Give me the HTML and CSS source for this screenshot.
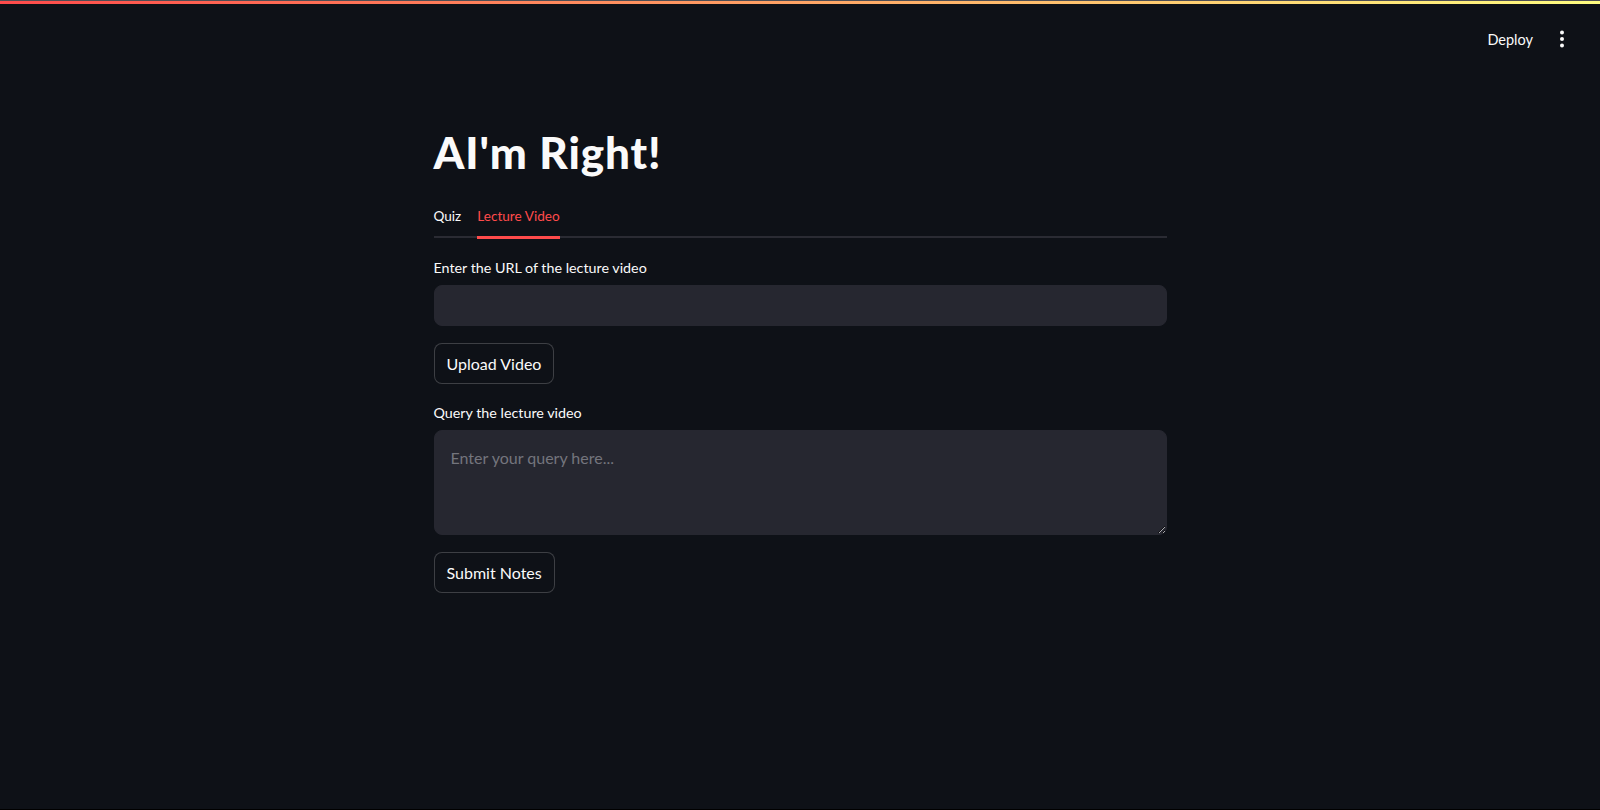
FILE: index.html
```html
<!DOCTYPE html>
<html lang="en">
<head>
<meta charset="utf-8">
<title>AI'm Right!</title>
<link rel="stylesheet" href="styles.css">
</head>
<body>
<div class="app">
  <div class="decoration"></div>
  <header class="toolbar">
    <span class="deploy">Deploy</span>
    <button class="menu" aria-label="Main menu">
      <svg width="24" height="24" viewBox="0 0 24 24"><circle cx="12" cy="5.5" r="2" fill="#fafafa"/><circle cx="12" cy="12" r="2" fill="#fafafa"/><circle cx="12" cy="18.5" r="2" fill="#fafafa"/></svg>
    </button>
  </header>
  <main class="main">
    <div class="block">
      <h1 class="title">AI'm Right!</h1>
      <div class="tablist">
        <button class="tab">Quiz</button>
        <button class="tab active">Lecture Video</button>
      </div>
      <div class="panel">
        <div class="widget">
          <label class="label" for="url">Enter the URL of the lecture video</label>
          <input id="url" class="text-input" type="text">
        </div>
        <div class="btn-row"><button class="btn">Upload Video</button></div>
        <div class="widget">
          <label class="label" for="query">Query the lecture video</label>
          <textarea id="query" class="text-area" placeholder="Enter your query here..."></textarea>
        </div>
        <div class="btn-row"><button class="btn">Submit Notes</button></div>
      </div>
    </div>
  </main>
</div>
</body>
</html>
```

FILE: styles.css
```css
* { box-sizing: border-box; }
html, body {
  margin: 0;
  padding: 0;
  height: 100%;
  background: #0e1117;
}
body {
  font-family: Lato, "Noto Sans", sans-serif;
  color: #fafafa;
}
.app {
  min-height: 100vh;
  border-bottom: 1px solid #000;
  display: flex;
  flex-direction: column;
}
.decoration {
  height: 4px;
  border-top: 1px solid #4f4f55;
  background: linear-gradient(90deg, #ff4b4b, #fffd80);
}
.toolbar {
  height: 70px;
  display: flex;
  justify-content: flex-end;
  align-items: center;
  padding-right: 26px;
  gap: 17px;
}
.deploy {
  font-size: 14.5px;
  color: #fafafa;
}
.menu {
  width: 24px;
  height: 24px;
  padding: 0;
  border: 0;
  background: transparent;
  display: flex;
  align-items: center;
  justify-content: center;
}
.main {
  display: flex;
  justify-content: center;
  padding-top: 52px;
}
.block {
  width: 733px;
}
.title {
  margin: 0;
  font-size: 44px;
  font-weight: 900;
  line-height: 1.2;
  letter-spacing: 0.9px;
}
.tablist {
  margin-top: 17px;
  display: flex;
  gap: 16px;
  border-bottom: 2px solid #2a2b33;
}
.tab {
  height: 43px;
  padding: 1px 0 0;
  margin-bottom: -3px;
  border: 0;
  border-bottom: 3px solid transparent;
  background: transparent;
  font-family: inherit;
  font-size: 13.6px;
  line-height: 20px;
  color: #fafafa;
}
.tab.active {
  color: #ff4b4b;
  border-bottom-color: #ff4b4b;
}
.panel {
  padding-top: 18px;
  display: flex;
  flex-direction: column;
  gap: 17px;
}
.widget {
  padding-top: 2px;
  display: flex;
  flex-direction: column;
}
.label {
  font-size: 14.3px;
  line-height: 20px;
  margin-bottom: 7px;
  color: #fafafa;
}
.text-input {
  height: 41px;
  width: 100%;
  background: #262730;
  border: 1px solid #262730;
  border-radius: 8px;
  color: #fafafa;
  font-family: inherit;
  font-size: 16px;
  padding: 0 14px;
  outline: none;
}
.text-area {
  height: 105px;
  width: 100%;
  background: #262730;
  border: 1px solid #262730;
  border-radius: 8px;
  color: #fafafa;
  font-family: inherit;
  font-size: 16px;
  line-height: 1.4;
  padding: 16px 16px;
  resize: vertical;
  outline: none;
  color-scheme: dark;
}
.text-area::placeholder {
  color: #74757d;
}
.btn-row {
  display: flex;
}
.btn {
  height: 41px;
  padding: 0 12px;
  background: #0e1117;
  border: 1px solid rgba(250, 250, 250, 0.2);
  border-radius: 8px;
  color: #fafafa;
  font-family: inherit;
  font-size: 16px;
}
```
